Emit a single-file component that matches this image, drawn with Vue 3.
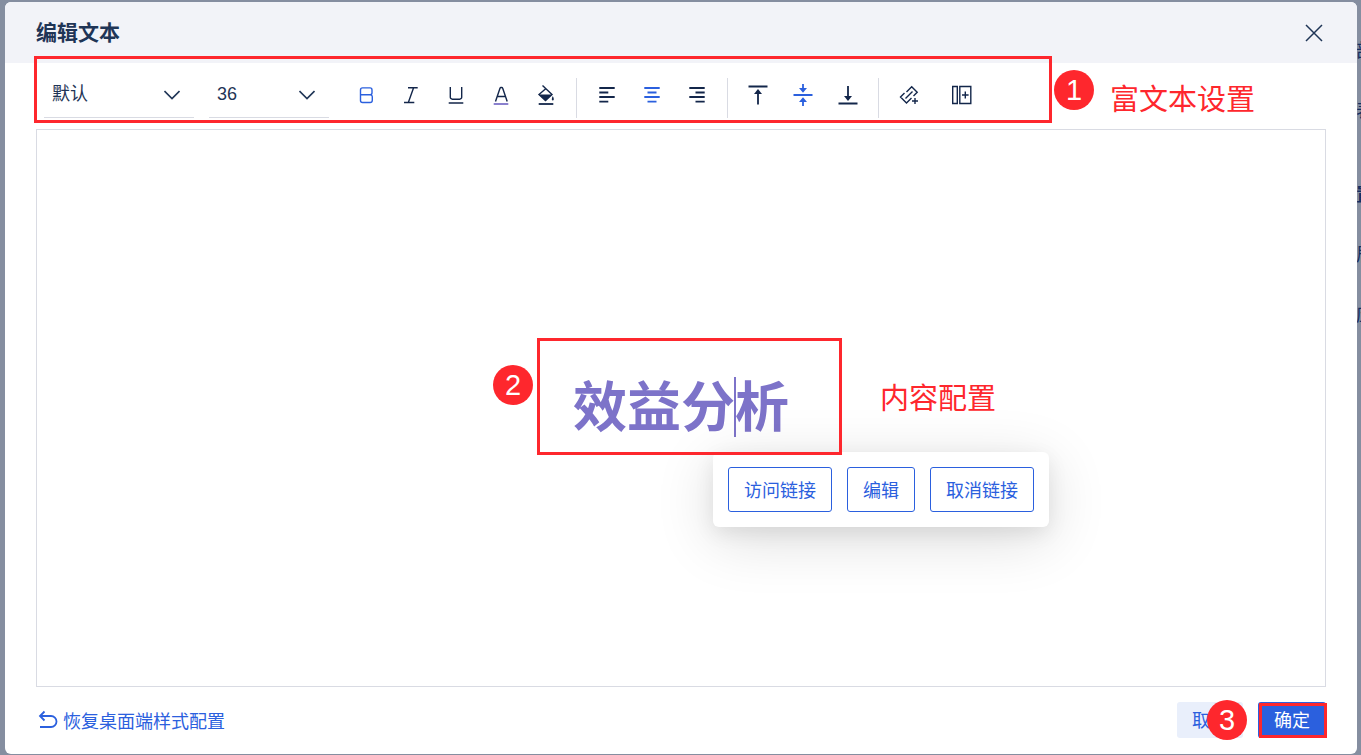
<template>
  <div class="page">
    <ul class="side-panel" aria-hidden="true">
      <li>部</li>
      <li>表</li>
      <li class="side-title">置</li>
      <li>居</li>
      <li>应</li>
    </ul>

    <section class="dialog" role="dialog" aria-labelledby="dialog-title">
      <header class="dialog-header">
        <h1 id="dialog-title">编辑文本</h1>
        <button class="close" type="button" aria-label="关闭">
          <svg viewBox="0 0 24 24"><path d="M4 4L20 20M20 4L4 20" /></svg>
        </button>
      </header>

      <div class="toolbar">
        <div class="select font-select">
          <select v-model="font" aria-label="字体">
            <option>默认</option>
            <option>宋体</option>
          </select>
          <svg class="chevron" viewBox="0 0 16 10"><path d="M0.5 1L8 8.5L15.5 1" /></svg>
        </div>
        <div class="select size-select">
          <select v-model="fontSize" aria-label="字号">
            <option>24</option>
            <option>36</option>
          </select>
          <svg class="chevron" viewBox="0 0 16 10"><path d="M0.5 1L8 8.5L15.5 1" /></svg>
        </div>

        <div v-for="(group, i) in groups" :key="i" class="tool-group">
          <button
            v-for="tool in group"
            :key="tool.name"
            class="tool"
            :class="[tool.name, { active: tool.active }]"
            type="button"
            :aria-label="tool.label"
          >
            <svg viewBox="0 0 24 24">
              <path v-if="tool.line" :d="tool.line" />
              <path v-if="tool.bar" class="bar" :d="tool.bar" />
              <path v-if="tool.solid" class="solid" :d="tool.solid" />
            </svg>
          </button>
        </div>

        <div class="mark toolbar-mark"></div>
        <span class="badge toolbar-badge">1</span>
        <span class="note toolbar-note">富文本设置</span>
      </div>

      <main class="editor">
        <div class="content">
          <p>效益分<i class="caret"></i>析</p>
          <div class="link-menu">
            <button v-for="item in linkActions" :key="item" type="button">{{ item }}</button>
          </div>
          <div class="mark content-mark"></div>
          <span class="badge content-badge">2</span>
          <span class="note content-note">内容配置</span>
        </div>
      </main>

      <footer class="dialog-footer">
        <button class="restore" type="button">
          <svg viewBox="0 0 20 20">
            <path d="M6.5 1.5L2 6L6.5 10.5M2 6H13A5.5 5.5 0 0 1 13 17H2" />
          </svg>
          恢复桌面端样式配置
        </button>
        <div class="actions">
          <button class="cancel" type="button">取消</button>
          <button class="confirm" type="button">确定</button>
          <div class="mark confirm-mark"></div>
          <span class="badge confirm-badge">3</span>
        </div>
      </footer>
    </section>
  </div>
</template>

<script setup>
import { ref } from "vue";

const font = ref("默认");
const fontSize = ref("36");

const linkActions = ["访问链接", "编辑", "取消链接"];

const groups = [
  [
    {
      name: "bold",
      label: "加粗",
      active: true,
      line: "M8.5 4.9H16A2 2 0 0 1 18 6.9V9.7A2 2 0 0 1 16 11.7A2.2 2.2 0 0 1 18.3 13.9V17.3A2.2 2.2 0 0 1 16.1 19.5H8.5A2 2 0 0 1 6.5 17.5V6.9A2 2 0 0 1 8.5 4.9ZM6.5 11.7H16",
    },
    { name: "italic", label: "斜体", line: "M9 4.7H18.7M5 19.5H15.3M14.5 5L9.5 19" },
    {
      name: "underline",
      label: "下划线",
      line: "M6.3 4V14.2A2 2 0 0 0 8.3 16.2H15.7A2 2 0 0 0 17.7 14.2V4M4.7 20H19.3",
    },
    {
      name: "color",
      label: "文字颜色",
      line: "M6.5 18.5L11 5.3Q11.3 4.5 12 4.5H12.7Q13.4 4.5 13.7 5.3L18.2 18.5M8 13.5H16.5",
      bar: "M4.7 21H19.3",
    },
    {
      name: "fill",
      label: "背景颜色",
      line: "M8.5 2.5L18 11.5L11.5 17.5L5 11.5L12 5.5",
      bar: "M4.7 21H19.3",
      solid: "M5 11.5H18L11.5 18ZM18.8 13Q20.2 15.5 19.8 16.8A1.1 1.1 0 0 1 17.8 16.8Q17.5 15.5 18.8 13Z",
    },
  ],
  [
    { name: "left", label: "左对齐", bar: "M4.3 5H19.7M4.3 9.5H13.3M4.3 14H19.7M4.3 18.6H13.3" },
    {
      name: "center",
      label: "居中",
      active: true,
      bar: "M4.3 5H19.7M7.5 9.5H16.5M4.3 14H19.7M7.5 18.6H16.5",
    },
    { name: "right", label: "右对齐", bar: "M4.3 5H19.7M10.5 9.5H19.7M4.3 14H19.7M10.5 18.6H19.7" },
  ],
  [
    { name: "top", label: "顶部对齐", bar: "M2.5 3.5H21.5M12 9V21.5", solid: "M12 6L16 11H8Z" },
    {
      name: "middle",
      label: "垂直居中",
      active: true,
      bar: "M2.5 12H21.5M12 1V6M12 18V23",
      solid: "M12 9.7L8 5H16ZM12 14.3L16 19H8Z",
    },
    { name: "bottom", label: "底部对齐", bar: "M2.5 20.5H21.5M12 3V14", solid: "M12 18L8 13H16Z" },
  ],
  [
    {
      name: "link",
      label: "插入链接",
      line: "M9.5 9L14.7 3.8L20.2 9.3L16.5 13M8.5 15.5L15.5 8.5M7.5 10L3.5 14L9.5 20L14.5 15M18 15V21M15 18H21",
    },
    {
      name: "column",
      label: "插入字段",
      line: "M2.7 3.5H7.3V20.5H2.7ZM9.8 3.5H20.8V20.5H9.8ZM15.3 8.5V15.5M12 12H18.6",
    },
  ],
];
</script>

<style>
body {
  background: #858ea0;
}
</style>

<style scoped>
.page {
  position: relative;
  box-sizing: border-box;
  display: flex;
  min-height: 100vh;
  padding: 2px 4px 1px 5px;
  background: #858ea0;
  color: #1f3556;
  font-family: "Liberation Sans", "Noto Sans CJK SC", sans-serif;
  font-size: 18px;
}

button,
select {
  padding: 0;
  border: 0;
  background: none;
  color: inherit;
  font: inherit;
  cursor: pointer;
}

svg {
  display: block;
  fill: none;
  stroke: currentColor;
}

/* 弹窗右侧露出的页面 */
.side-panel {
  position: absolute;
  top: 3px;
  right: 0;
  width: 5px;
  margin: 0;
  padding: 0;
  overflow: hidden;
  list-style: none;
  line-height: 24px;
  color: #152f60;
}

.side-panel li {
  margin-top: 36px;
}

.side-panel .side-title {
  margin-top: 60px;
  font-weight: 700;
}

.dialog {
  position: relative;
  flex: 1;
  display: flex;
  flex-direction: column;
  border-radius: 6px;
  background: #fff;
}

.dialog-header {
  display: flex;
  align-items: center;
  justify-content: space-between;
  height: 61px;
  padding: 0 31px;
  border-radius: 6px 6px 0 0;
  background: #f2f3f8;
}

.dialog-header h1 {
  margin: 0;
  font-size: 21px;
  line-height: 30px;
  font-weight: 700;
}

.close svg {
  width: 24px;
  height: 24px;
  stroke-width: 1.5;
}

.toolbar {
  position: relative;
  box-sizing: border-box;
  display: flex;
  align-items: flex-end;
  gap: 15px;
  height: 66px;
  margin: 0 31px;
  padding: 0 0 11px 8px;
}

.select {
  position: relative;
  height: 44px;
  border-bottom: 1px solid #d9dbe3;
}

.select select {
  width: 100%;
  height: 42px;
  padding: 0 8px;
  appearance: none;
  outline: none;
}

.font-select {
  width: 150px;
}

.size-select {
  width: 120px;
  margin-right: 7px;
}

.chevron {
  position: absolute;
  top: 17px;
  right: 14px;
  width: 16px;
  height: 10px;
  stroke-width: 1.6;
  pointer-events: none;
}

.tool-group {
  box-sizing: border-box;
  display: flex;
  align-items: center;
  gap: 15px;
  height: 40px;
  padding-bottom: 6px;
}

.tool-group + .tool-group {
  padding-left: 15px;
  border-left: 1px solid #d9dbe3;
}

.tool {
  display: flex;
  align-items: center;
  justify-content: center;
  width: 30px;
  height: 30px;
  color: #13264a;
}

.tool svg {
  width: 24px;
  height: 24px;
  stroke-width: 1.4;
}

.tool .bar {
  stroke-width: 1.8;
}

.tool .solid {
  fill: currentColor;
  stroke: none;
}

.tool.color .bar {
  stroke: #7d73c9;
}

.tool.active {
  color: #2b60de;
}

.tool.column {
  margin-left: 8px;
}

.editor {
  flex: 1;
  display: flex;
  align-items: center;
  justify-content: center;
  margin: 0 31px;
  border: 1px solid #d9dbe3;
}

.content {
  position: relative;
}

.content p {
  margin: 0;
  color: #7d73c9;
  font-size: 54px;
  line-height: 60px;
  font-weight: 700;
}

.caret {
  position: absolute;
  top: -1px;
  width: 2px;
  height: 60px;
  margin-left: -1px;
  background: #7d73c9;
}

.link-menu {
  position: absolute;
  top: 74px;
  left: 140px;
  display: flex;
  gap: 15px;
  padding: 15px;
  border-radius: 6px;
  background: #fff;
  box-shadow: 0 12px 60px rgba(0, 0, 0, 0.14), 0 6px 20px rgba(0, 0, 0, 0.08);
}

.link-menu button {
  height: 45px;
  padding: 0 15px 2px;
  border: 1px solid #2b60de;
  border-radius: 3px;
  color: #2b60de;
  white-space: nowrap;
}

.dialog-footer {
  box-sizing: border-box;
  display: flex;
  align-items: center;
  justify-content: space-between;
  height: 67px;
  margin: 0 31px;
  padding-bottom: 2px;
}

.restore {
  display: flex;
  align-items: center;
  gap: 5px;
  padding-left: 2px;
  color: #2b60de;
}

.restore svg {
  width: 20px;
  height: 20px;
  stroke-width: 1.8;
}

.actions {
  position: relative;
  display: flex;
  gap: 15px;
}

.actions button {
  height: 36px;
  padding: 0 15px 2px;
  border-radius: 3px;
}

.actions .cancel {
  background: #e9effb;
  color: #2b60de;
}

.actions .confirm {
  padding: 0 16px 2px;
  background: #2b60de;
  color: #fff;
}

/* 标注 */
.mark {
  position: absolute;
  box-sizing: border-box;
  border: 3px solid #fe272d;
  pointer-events: none;
}

.badge {
  position: absolute;
  width: 40px;
  height: 40px;
  border-radius: 50%;
  background: #fe272d;
  color: #fff;
  font-size: 29px;
  line-height: 40px;
  text-align: center;
}

.note {
  position: absolute;
  color: #fe272d;
  font-size: 29px;
  line-height: 40px;
  white-space: nowrap;
}

.toolbar-mark {
  top: -7px;
  left: -2px;
  width: 1018px;
  height: 67px;
}

.toolbar-badge {
  top: 7px;
  left: 1018px;
}

.toolbar-note {
  top: 17px;
  left: 1074px;
}

.content-mark {
  top: -40px;
  left: -36px;
  width: 305px;
  height: 117px;
}

.content-badge {
  top: -13px;
  left: -80px;
}

.content-note {
  top: 1px;
  left: 307px;
}

.confirm-mark {
  top: 1px;
  right: -1px;
  width: 68px;
  height: 35px;
}

.confirm-badge {
  top: -2px;
  right: 79px;
}
</style>
